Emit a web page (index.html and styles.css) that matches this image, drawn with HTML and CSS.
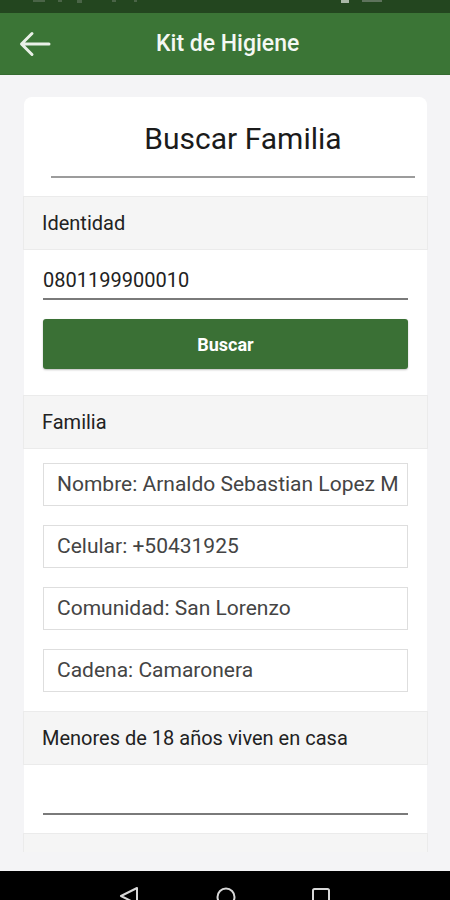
FILE: index.html
```html
<!DOCTYPE html>
<html lang="es">
<head>
<meta charset="utf-8">
<title>Kit de Higiene</title>
<link rel="stylesheet" href="styles.css">
</head>
<body>
<div class="screen">
  <div class="statusbar">
    <svg class="status-icons" width="450" height="13" viewBox="0 0 450 13">
      <rect x="33" y="0" width="12" height="2" fill="#4a6447"/>
      <rect x="58" y="0" width="4" height="2" fill="#4a6447"/>
      <rect x="77" y="0" width="5" height="3" fill="#4a6447"/>
      <rect x="112" y="0" width="4" height="2" fill="#4a6447"/>
      <rect x="134" y="0" width="3" height="2" fill="#4a6447"/>
      <rect x="341" y="0" width="8" height="3" fill="#a9b8a7"/>
      <rect x="362" y="0" width="20" height="2" fill="#5e735c"/>
    </svg>
  </div>
  <header class="appbar">
    <svg class="back" width="32" height="26" viewBox="0 0 32 26">
      <path d="M30 13 H3 M13 2.5 L2.5 13 L13 23.5" fill="none" stroke="#e9f0e7" stroke-width="3" stroke-linecap="round" stroke-linejoin="round"/>
    </svg>
    <h1 class="appbar-title">Kit de Higiene</h1>
  </header>
  <main class="main">
    <div class="scroll">
      <section class="card">
        <div class="card-title">
          <h2 class="title-text">Buscar Familia</h2>
          <div class="title-rule"></div>
        </div>

        <div class="section-head">Identidad</div>
        <div class="section-body">
          <div class="line-input">0801199900010</div>
          <button class="btn">Buscar</button>
        </div>

        <div class="section-head">Familia</div>
        <div class="section-body fields">
          <div class="field">Nombre: Arnaldo Sebastian Lopez M</div>
          <div class="field">Celular: +50431925</div>
          <div class="field">Comunidad: San Lorenzo</div>
          <div class="field">Cadena: Camaronera</div>
        </div>

        <div class="section-head">Menores de 18 años viven en casa</div>
        <div class="section-body">
          <div class="line-input empty"></div>
        </div>

        <div class="section-head">&nbsp;</div>
      </section>
    </div>
  </main>
  <nav class="navbar">
    <svg width="450" height="29" viewBox="0 0 450 29">
      <path d="M137 17 L121 25 L137 33 Z" fill="none" stroke="#d8d8d8" stroke-width="2" stroke-linejoin="round"/>
      <circle cx="226" cy="26" r="8.5" fill="none" stroke="#d8d8d8" stroke-width="2"/>
      <rect x="313" y="18" width="16" height="16" rx="1.5" fill="none" stroke="#d8d8d8" stroke-width="2"/>
    </svg>
  </nav>
</div>
</body>
</html>
```

FILE: styles.css
```css
* { box-sizing: border-box; }

html, body {
  margin: 0;
  padding: 0;
  background: #000;
}

body {
  font-family: Roboto, "Noto Sans", "Liberation Sans", sans-serif;
  color: #222;
}

.screen {
  width: 450px;
  height: 900px;
  display: flex;
  flex-direction: column;
  overflow: hidden;
}

.statusbar {
  height: 13px;
  background: #23461f;
  flex: none;
}

.status-icons { display: block; }

.appbar {
  height: 62px;
  flex: none;
  background: #3b7536;
  display: flex;
  align-items: center;
  padding-left: 19px;
  border-bottom: 1px solid #356b31;
}

.back {
  display: block;
  flex: none;
}

.appbar-title {
  margin: 0 0 0 105px;
  font-size: 23px;
  font-weight: 500;
  color: #f4f8f3;
}

.main {
  height: 796px;
  flex: none;
  background: #f4f4f6;
  padding: 22px 0 19px;
}

.scroll {
  height: 755px;
  overflow: hidden;
}

.card {
  margin: 0 23px 0 24px;
  background: #fff;
  border-radius: 8px 8px 0 0;
}

.card-title {
  height: 99px;
  padding: 24px 12px 0 27px;
}

.title-text {
  margin: 0;
  font-size: 30px;
  font-weight: 400;
  color: #1b1b1b;
  text-align: center;
  padding-left: 20px;
  line-height: 36px;
}

.title-rule {
  margin-top: 19px;
  height: 2px;
  background: #9c9c9c;
}

.section-head {
  background: #f5f5f5;
  border: 1px solid #ebebeb;
  height: 54px;
  display: flex;
  align-items: center;
  padding-left: 18px;
  font-size: 20px;
  color: #222;
  margin: 0 -1px;
}

.section-body {
  padding: 0 19px 0 19px;
}

.line-input {
  height: 40px;
  padding-top: 8px;
  font-size: 20px;
  color: #222;
  border-bottom: 2px solid #7a7a7a;
  margin-top: 10px;
  line-height: 24px;
}

.line-input.empty {
  height: 50px;
  margin-top: 0;
  margin-bottom: 18px;
}

.btn {
  display: block;
  width: 100%;
  height: 50px;
  margin: 19px 0 26px;
  border: none;
  border-radius: 3px;
  background: #3a7035;
  color: #fff;
  font-family: Roboto, "Liberation Sans", sans-serif;
  font-size: 18px;
  font-weight: 700;
  box-shadow: 0 1px 2px rgba(0,0,0,0.25);
}

.fields {
  display: flex;
  flex-direction: column;
  gap: 19px;
  padding-top: 14px;
  padding-bottom: 19px;
}

.field {
  height: 43px;
  border: 1px solid #dedede;
  padding: 0 4px 0 13px;
  font-size: 21px;
  color: #444;
  line-height: 41px;
  white-space: nowrap;
  overflow: hidden;
}

.navbar {
  height: 29px;
  flex: none;
  background: #000;
  overflow: hidden;
}

.navbar svg { display: block; }
```
